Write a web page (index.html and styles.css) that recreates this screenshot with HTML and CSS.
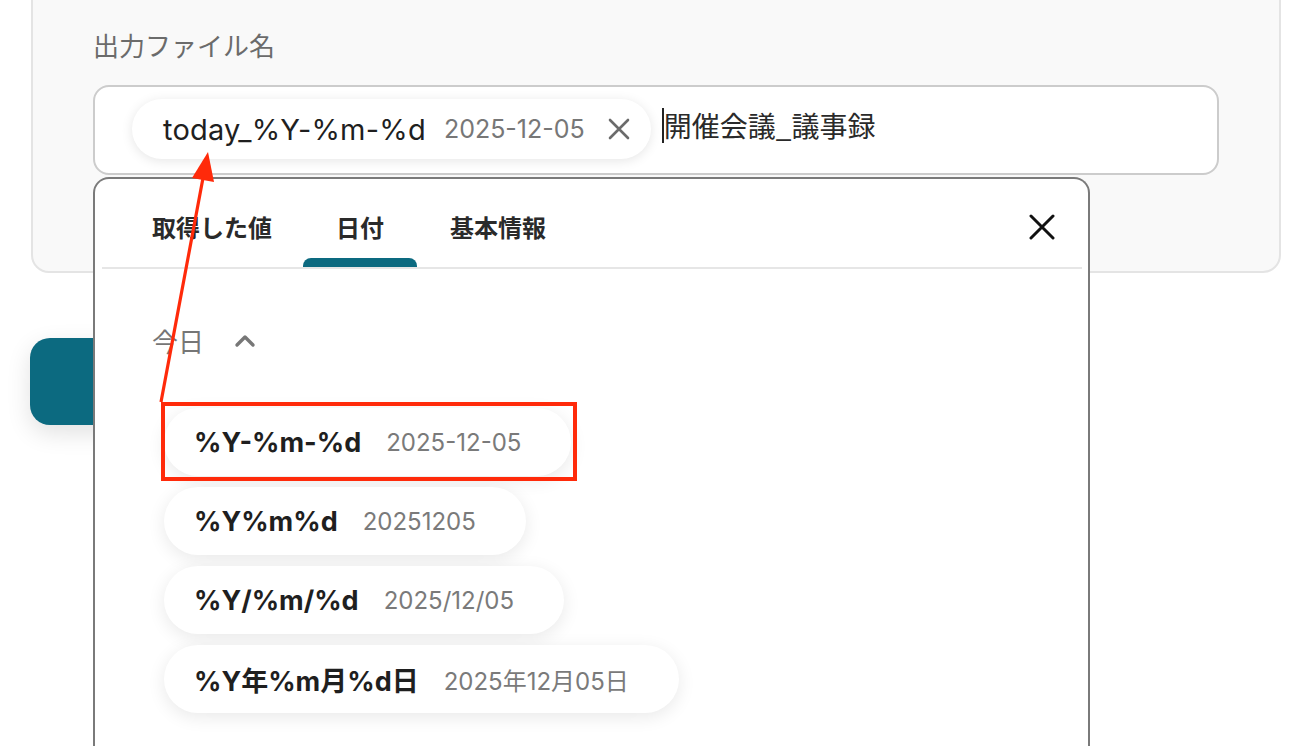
FILE: index.html
```html
<!DOCTYPE html>
<html lang="ja">
<head>
<meta charset="utf-8">
<link rel="stylesheet" href="styles.css">
</head>
<body>
<div class="page">
  <section class="card">
    <div class="label">出力ファイル名</div>
    <div class="input">
      <span class="tag">
        <span class="tag-key">today_%Y-%m-%d</span>
        <span class="tag-val">2025-12-05</span>
        <svg class="tag-x" viewBox="0 0 24 24" width="24" height="24"><path d="M3 3L21 21M21 3L3 21" stroke="#6b6b6b" stroke-width="2.6" stroke-linecap="round" fill="none"/></svg>
      </span>
      <span class="caret"></span>
      <span class="input-text">開催会議_議事録</span>
    </div>
  </section>

  <div class="teal-btn"></div>

  <div class="dropdown">
    <div class="tabs">
      <div class="tab first">取得した値</div>
      <div class="tab active">日付</div>
      <div class="tab">基本情報</div>
      <svg class="close" viewBox="0 0 26 26" width="26" height="26"><path d="M2 2L24 24M24 2L2 24" stroke="#111" stroke-width="3" stroke-linecap="round" fill="none"/></svg>
    </div>
    <div class="body">
      <div class="section-head">
        <span class="section-title">今日</span>
        <svg class="chev" viewBox="0 0 22 14" width="22" height="14"><path d="M3 11L11 3L19 11" stroke="#777" stroke-width="3.4" stroke-linecap="round" stroke-linejoin="round" fill="none"/></svg>
      </div>
      <div class="chips">
        <div class="chip"><span class="chip-key">%Y-%m-%d</span><span class="chip-val">2025-12-05</span></div>
        <div class="chip"><span class="chip-key">%Y%m%d</span><span class="chip-val">20251205</span></div>
        <div class="chip"><span class="chip-key">%Y/%m/%d</span><span class="chip-val">2025/12/05</span></div>
        <div class="chip"><span class="chip-key">%Y年%m月%d日</span><span class="chip-val">2025年12月05日</span></div>
      </div>
    </div>
  </div>

  <svg class="annot" width="1316" height="746" viewBox="0 0 1316 746">
    <rect x="163" y="404" width="412" height="75" fill="none" stroke="#ff2a0a" stroke-width="4"/>
    <line x1="161" y1="402" x2="203" y2="178" stroke="#ff2a0a" stroke-width="3.2"/>
    <polygon points="208,152 214,182 192,178" fill="#ff2a0a"/>
  </svg>
</div>
</body>
</html>
```
FILE: styles.css
```css
html, body {
  margin: 0;
  padding: 0;
  background: #ffffff;
}
body {
  width: 1316px;
  height: 746px;
  overflow: hidden;
  font-family: Inter, "Noto Sans CJK JP", sans-serif;
  color: #222;
}
.page {
  position: relative;
  display: flow-root;
  width: 1316px;
  height: 746px;
  overflow: hidden;
}
.card {
  margin: -40px 0 0 31px;
  width: 1250px;
  box-sizing: border-box;
  background: #f9f9f9;
  border: 2px solid #e4e4e4;
  border-radius: 18px;
  padding: 65px 60px 96px 60px;
}
.label {
  font-family: "Noto Sans CJK JP", sans-serif;
  font-size: 26px;
  line-height: 36px;
  color: #6b6b6b;
  margin-bottom: 22px;
}
.input {
  height: 90px;
  box-sizing: border-box;
  background: #fff;
  border: 2px solid #cccccc;
  border-radius: 16px;
  display: flex;
  align-items: center;
  padding-left: 37px;
}
.tag {
  display: flex;
  align-items: center;
  height: 60px;
  margin-top: -2px;
  box-sizing: border-box;
  padding: 0 20px 0 31px;
  border-radius: 30px;
  background: #fff;
  box-shadow: 0 2px 12px rgba(0,0,0,0.10);
}
.tag-key {
  font-size: 29px;
  color: #1f1f1f;
  letter-spacing: 0.2px;
}
.tag-val {
  font-size: 25px;
  color: #777;
  margin-left: 18px;
}
.tag-x {
  margin-left: 22px;
}
.caret {
  width: 2px;
  height: 35px;
  background: #222;
  margin-left: 11px;
  margin-bottom: 9px;
}
.input-text {
  font-family: "Noto Sans CJK JP", sans-serif;
  font-size: 28px;
  line-height: 36px;
  color: #2a2a2a;
  margin-bottom: 10px;
}
.teal-btn {
  margin: 65px 0 0 30px;
  width: 300px;
  height: 87px;
  border-radius: 20px;
  background: #0c6a80;
  box-shadow: 0 8px 24px rgba(0,0,0,0.12);
}
.dropdown {
  position: absolute;
  left: 93px;
  top: 177px;
  width: 997px;
  height: 569px;
  box-sizing: border-box;
  background: #fff;
  border: 2px solid #7a7a7a;
  border-bottom: 0;
  border-radius: 16px 16px 0 0;
  padding: 0 6px 0 7px;
}
.tabs {
  display: flex;
  align-items: flex-end;
  padding-left: 17px;
  border-bottom: 2px solid #e6e6e6;
}
.tab {
  font-family: "Noto Sans CJK JP", sans-serif;
  font-weight: 700;
  font-size: 24px;
  line-height: 30px;
  color: #2a2a2a;
  padding: 33px 33px 25px;
  position: relative;
}
.tab.first {
  padding-right: 31px;
}
.tab.active::after {
  content: "";
  position: absolute;
  left: 0;
  right: 0;
  bottom: 0;
  height: 9px;
  background: #0c6a80;
  border-radius: 8px 8px 0 0;
}
.close {
  margin-left: auto;
  margin-right: 27px;
  align-self: flex-start;
  margin-top: 35px;
}
.body {
  padding: 54px 0 0 50px;
}
.section-head {
  display: flex;
  align-items: center;
  height: 36px;
}
.section-title {
  font-family: "Noto Sans CJK JP", sans-serif;
  font-size: 26px;
  line-height: 36px;
  color: #767676;
}
.chev {
  margin-left: 30px;
}
.chips {
  display: flex;
  flex-direction: column;
  align-items: flex-start;
  gap: 11px;
  margin-top: 49px;
  padding-left: 12px;
}
.chip {
  display: flex;
  align-items: center;
  height: 68px;
  box-sizing: border-box;
  padding: 0 50px 0 30px;
  border-radius: 34px;
  background: #fff;
  box-shadow: 0 4px 18px rgba(0,0,0,0.09);
}
.chip-key {
  font-weight: 700;
  font-size: 27px;
  color: #1f1f1f;
}
.chip-val {
  font-size: 24px;
  color: #7a7a7a;
  margin-left: 25px;
}
.annot {
  position: absolute;
  left: 0;
  top: 0;
  pointer-events: none;
}
```
